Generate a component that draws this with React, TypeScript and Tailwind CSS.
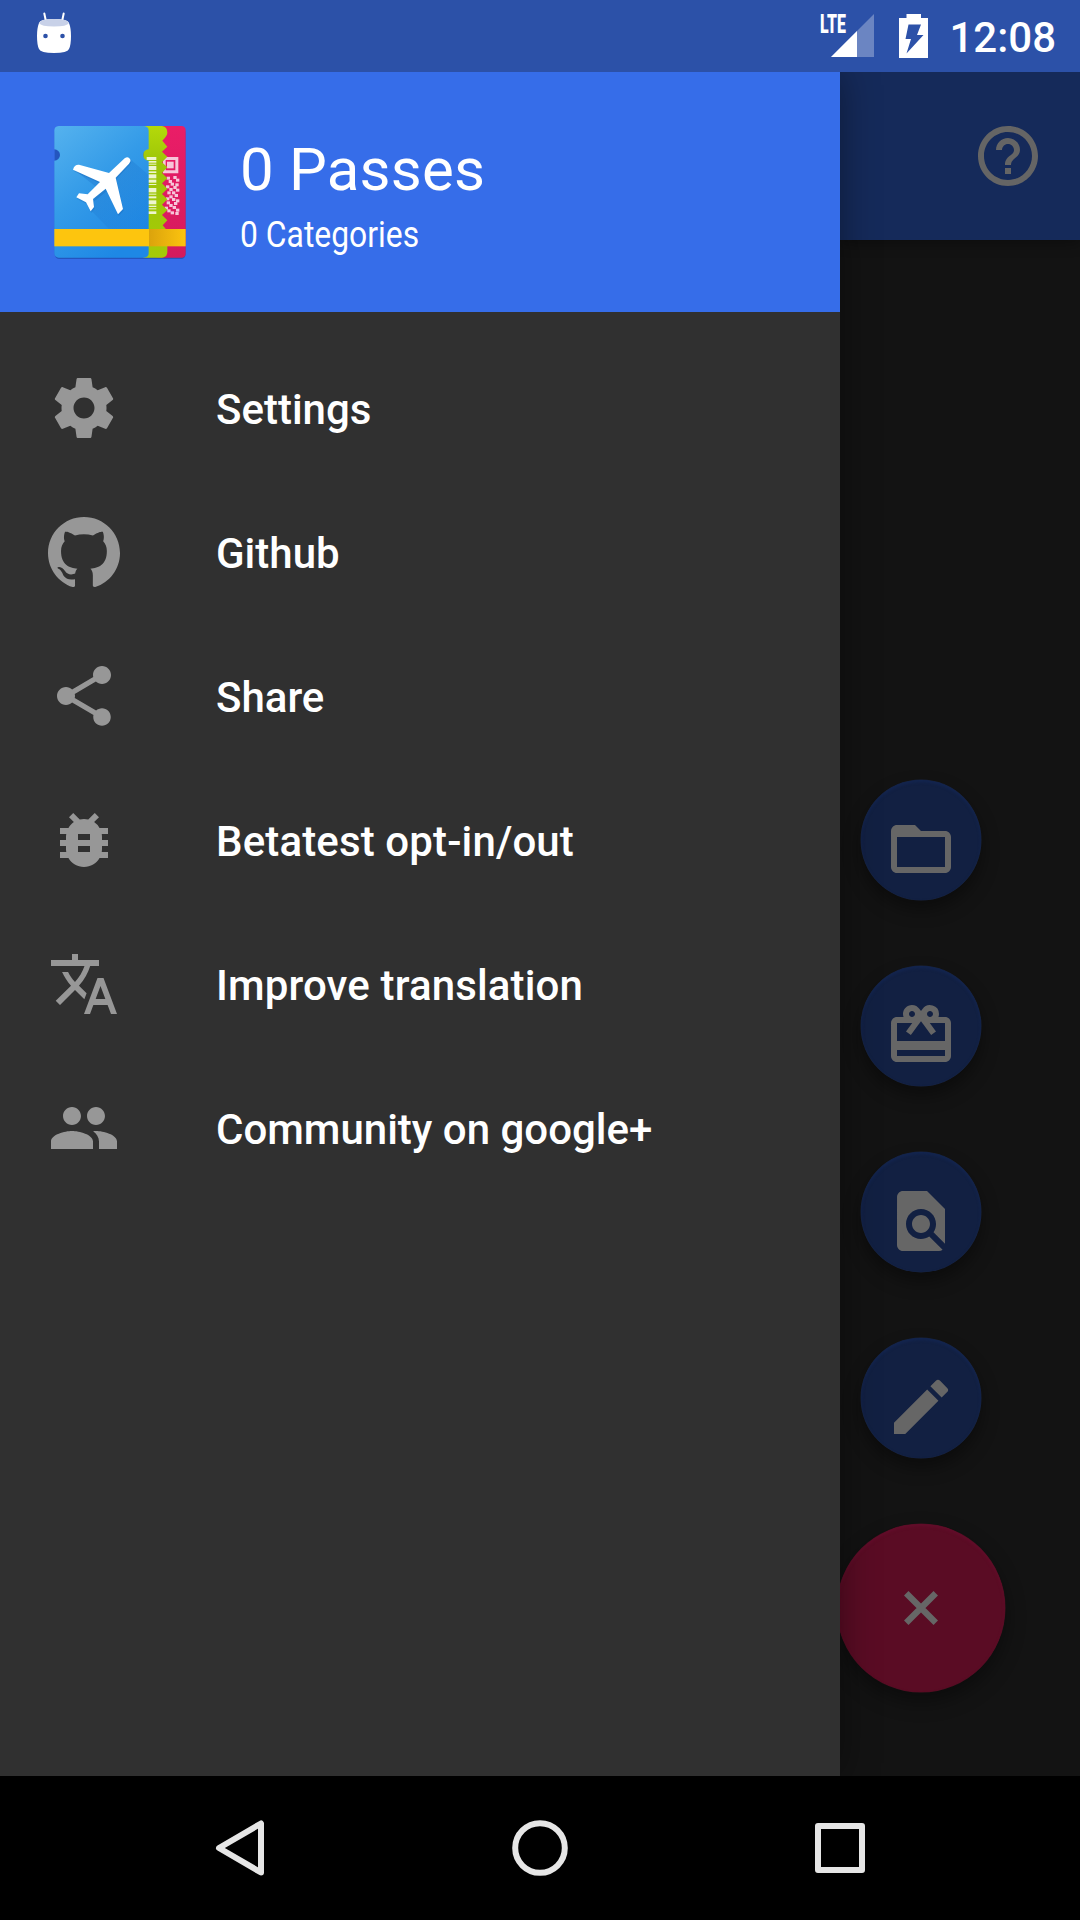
import type { ReactNode } from "react";
import {
  MdBugReport,
  MdEdit,
  MdFindInPage,
  MdFolderOpen,
  MdGroup,
  MdHelpOutline,
  MdRedeem,
  MdShare,
  MdTranslate,
} from "react-icons/md";
import { SiGithub } from "react-icons/si";

function SettingsIcon() {
  return (
    <svg viewBox="0 0 24 24" className="size-[72px]" fill="currentColor">
      <path d="M19.43 12.98c.04-.32.07-.64.07-.98s-.03-.66-.07-.98l2.11-1.65c.19-.15.24-.42.12-.64l-2-3.46c-.12-.22-.39-.3-.61-.22l-2.49 1c-.52-.4-1.08-.73-1.69-.98l-.38-2.65C14.46 2.18 14.25 2 14 2h-4c-.25 0-.46.18-.49.42l-.38 2.65c-.61.25-1.17.59-1.69.98l-2.49-1c-.23-.09-.49 0-.61.22l-2 3.46c-.13.22-.07.49.12.64l2.11 1.65c-.04.32-.07.65-.07.98s.03.66.07.98l-2.11 1.65c-.19.15-.24.42-.12.64l2 3.46c.12.22.39.3.61.22l2.49-1c.52.4 1.08.73 1.69.98l.38 2.65c.03.24.24.42.49.42h4c.25 0 .46-.18.49-.42l.38-2.65c.61-.25 1.17-.59 1.69-.98l2.49 1c.23.09.49 0 .61-.22l2-3.46c.12-.22.07-.49-.12-.64l-2.11-1.65zM12 15.5c-1.93 0-3.5-1.57-3.5-3.5s1.57-3.5 3.5-3.5 3.5 1.57 3.5 3.5-1.57 3.5-3.5 3.5z" />
    </svg>
  );
}

function AndroidHead() {
  return (
    <svg viewBox="0 0 36 42" className="h-[42px] w-9" fill="#fff">
      <path d="M8.3 1.5 10 9.5M27.7 1.5 26 9.5" stroke="#fff" strokeWidth="2" strokeLinecap="round" />
      <path d="M3 11Q4 7 18 7Q32 7 33 11Q35 16 35 24Q35 33 33 37Q31.5 41 18 41Q4.500 41 3 37Q1 33 1 24Q1 16 3 11Z" />
      <path d="M3 11Q4 7 18 7Q32 7 33 11Q31 14.500 18 14.500Q5 14.500 3 11Z" fill="#c8d1e8" />
      <circle cx="9.500" cy="24" r="2.300" fill="#2c51a8" />
      <circle cx="26.500" cy="24" r="2.300" fill="#2c51a8" />
    </svg>
  );
}

function StatusBar() {
  return (
    <header className="relative z-20 flex h-[72px] shrink-0 items-start bg-[#2c51a8] pl-9">
      <div className="mt-3">
        <AndroidHead />
      </div>
      <div className="relative mt-[14px] ml-auto h-[43px] w-[54px]">
        <svg viewBox="0 0 54 43" className="h-[43px] w-[54px]">
          <path d="M11 43 54 0V43Z" fill="#6b85c2" />
          <path d="M11 43 37 17V43Z" fill="#fff" />
        </svg>
        <span className="absolute -top-[3px] left-0 origin-left scale-x-[0.61] text-[26px] leading-[27px] font-black">
          LTE
        </span>
      </div>
      <svg viewBox="0 0 29 44" className="mt-[14px] ml-[25px] h-11 w-[29px]">
        <path d="M7.500 0H22V4H29V44H0V4H7.500Z" fill="#fff" />
        <path d="M9.500 10.500H22L18 21H24.500L7.500 39.500L12 25H6.500Z" fill="#2c51a8" />
      </svg>
      <span className="mt-[14px] mr-6 ml-[21px] text-[42px] leading-[48px] font-medium">12:08</span>
    </header>
  );
}

const qrCells: [number, number][] = [
  [410, 230], [430, 228], [438, 236], [416, 240], [422, 248], [436, 250], [408, 256], [430, 258],
  [418, 264], [438, 266], [412, 274], [426, 274], [434, 282], [418, 286], [408, 292], [426, 294],
  [438, 298], [432, 306], [410, 304], [418, 312], [404, 320], [428, 318], [438, 326], [412, 328],
  [422, 334], [436, 336],
];

const barcode: [number, number][] = [
  [171, 9], [183, 5], [191, 3], [198, 12], [214, 5], [223, 12], [239, 9], [252, 3], [264, 13],
  [281, 3], [289, 6], [301, 12], [317, 4], [325, 3], [334, 8],
];

function PassLogo() {
  return (
    <svg viewBox="54 60 432 432" className="size-36 shrink-0">
      <defs>
        <linearGradient id="ticket" x1="0" y1="0" x2="0.6" y2="1">
          <stop offset="0" stopColor="#55b2ee" />
          <stop offset="0.5" stopColor="#349be8" />
          <stop offset="1" stopColor="#1e88e5" />
        </linearGradient>
        <linearGradient id="planeShade" x1="0" y1="0" x2="1" y2="1">
          <stop offset="0" stopColor="#1565c0" stopOpacity="0.35" />
          <stop offset="1" stopColor="#1565c0" stopOpacity="0.05" />
        </linearGradient>
        <linearGradient id="edge" x1="0" x2="1" y1="0" y2="0">
          <stop offset="0" stopColor="#dba30c" />
          <stop offset="1" stopColor="#fcc40f" />
        </linearGradient>
        <linearGradient id="pink" x1="0" x2="0" y1="0" y2="1">
          <stop offset="0" stopColor="#ea1d67" />
          <stop offset="1" stopColor="#d41a5d" />
        </linearGradient>
        <linearGradient id="lime" x1="0" x2="0" y1="0" y2="1">
          <stop offset="0" stopColor="#b4d90a" />
          <stop offset="0.3" stopColor="#9cc408" />
          <stop offset="1" stopColor="#a4cb08" />
        </linearGradient>
      </defs>
      <rect x="74" y="84" width="393" height="393" rx="14" fill="#123d96" opacity="0.5" />
      <path d="M380 78H454Q467 78 467 92V459Q467 473 454 473H380Z" fill="url(#pink)" />
      <g fill="#f7c6d9">
        <path fillRule="evenodd" d="M399 171H445V220H399ZM407 180V211H436V180Z" />
        <rect x="411" y="185" width="20" height="20" />
        {qrCells.map(([x, y]) => (
          <rect key={`${x}-${y}`} x={x} y={y} width="10" height="9" />
        ))}
      </g>
      <path
        d="M340 78H396Q412 80 412 98Q412 107 397 122L412 140L396 155L412 170L396 187L412 202L396 219L412 235L396 250L412 266L396 282L412 298L396 314L412 330L396 345L412 361L398 376L412 392V456Q412 471 396 473H340Z"
        fill="url(#lime)"
      />
      <g fill="#eef5cf">
        {barcode.map(([y, h]) => (
          <rect key={y} x="350" y={y} width="29" height={h} />
        ))}
      </g>
      <path
        d="M86 78H342Q356 80 356 92V148A17 17 0 0 0 356 182V459Q356 472 342 473H86Q73 472 73 459V182A17 17 0 0 0 73 148V92Q73 79 86 78Z"
        fill="url(#ticket)"
      />
      <path d="M301 178 356 225V386H236L182 330 205 266 134 210 240 220Z" fill="url(#planeShade)" />
      <rect x="73" y="387" width="284" height="52" fill="#fdc50e" />
      <rect x="357" y="387" width="110" height="52" fill="url(#edge)" />
      <path
        d="M287 174Q297 168 301 178Q303 184 297 190L257 233L279 327L264 343L229 268L189 300L192 321L182 334L168 307L139 292L147 280L173 283L210 246L129 209L143 193L237 219Z"
        fill="#0f4f9f"
        opacity="0.2"
        transform="translate(2 5)"
      />
      <path
        d="M284 175Q294 168 300 177Q304 183 297 191L257 233L279 327L264 343L227 266L189 297L192 321L182 334L168 307L139 292L147 280L173 283L210 246L129 209Q133 193 147 194L237 219Z"
        fill="#fff"
      />
    </svg>
  );
}

const menu: { label: string; icon: ReactNode; tracking?: string }[] = [
  { label: "Settings", icon: <SettingsIcon /> },
  { label: "Github", icon: <SiGithub size={72} /> },
  { label: "Share", icon: <MdShare size={72} /> },
  { label: "Betatest opt-in/out", icon: <MdBugReport size={72} />, tracking: "tracking-[0.13px]" },
  { label: "Improve translation", icon: <MdTranslate size={72} />, tracking: "tracking-[0.14px]" },
  { label: "Community on google+", icon: <MdGroup size={72} /> },
];

function Drawer() {
  return (
    <aside className="relative z-10 flex w-[840px] shrink-0 flex-col bg-[#303030] shadow-[0_0_36px_rgba(0,0,0,0.4)]">
      <div className="flex h-60 bg-[#366de9] pt-12 pl-12">
        <PassLogo />
        <div className="ml-12 pt-[15px]">
          <div className="text-[60px] leading-[70px] tracking-[0.2px]">0 Passes</div>
          <div className="origin-left scale-x-[0.885] pt-[9px] text-[36px] leading-[42px] whitespace-nowrap">
            0 Categories
          </div>
        </div>
      </div>
      <nav className="pt-6">
        {menu.map(({ label, icon, tracking = "" }) => (
          <a key={label} className="flex h-36 items-center gap-24 pl-12">
            <span className="text-[#979797]">{icon}</span>
            <span className={`pt-[3px] text-[42px] leading-[50px] font-medium ${tracking}`}>{label}</span>
          </a>
        ))}
      </nav>
    </aside>
  );
}

const actions: { name: string; icon: ReactNode }[] = [
  { name: "open", icon: <MdFolderOpen size={72} /> },
  { name: "demo", icon: <MdRedeem size={72} /> },
  { name: "scan", icon: <MdFindInPage size={72} /> },
  { name: "create", icon: <MdEdit size={72} /> },
];

function Content() {
  return (
    <main className="flex flex-1 flex-col overflow-hidden bg-[#131313] text-[#666]">
      <div className="flex h-[168px] shrink-0 items-center justify-end bg-[#152a5a] pr-9 shadow-[0_4px_12px_rgba(0,0,0,0.3)]">
        <MdHelpOutline size={72} color="#656565" />
      </div>
      <div className="mt-[540px] flex w-[162px] flex-col items-center gap-[66px]">
        {actions.map(({ name, icon }) => (
          <button
            key={name}
            aria-label={name}
            className="flex size-[120px] shrink-0 items-center justify-center rounded-full bg-[#122042] pt-[18px] shadow-[0_0_0_0.5px_#1a2541,0_9px_18px_rgba(0,0,0,0.4),inset_0_2px_3px_#132550]"
          >
            {icon}
          </button>
        ))}
        <button
          aria-label="close"
          className="flex size-[168px] shrink-0 items-center justify-center rounded-full bg-[#5a0c24] shadow-[0_0_0_0.5px_#4d1223,0_9px_20px_rgba(0,0,0,0.4),inset_0_2px_3px_#630d2b]"
        >
          <svg viewBox="0 0 34 34" className="size-[34px]" stroke="currentColor" strokeWidth="6.300">
            <path d="M2.250 2.250 31.750 31.750M31.750 2.250 2.250 31.750" />
          </svg>
        </button>
      </div>
    </main>
  );
}

function NavBar() {
  return (
    <footer className="relative z-20 flex h-36 shrink-0 items-center justify-between bg-black px-[210px]">
      <svg viewBox="0 0 60 60" className="size-[60px]" fill="none" stroke="#e6e6e6" strokeWidth="6" strokeLinejoin="round">
        <path d="M51 5.500V54.500L9 30Z" />
      </svg>
      <svg viewBox="0 0 60 60" className="size-[60px]" fill="none" stroke="#e6e6e6" strokeWidth="6">
        <circle cx="30" cy="30" r="24.800" />
      </svg>
      <svg viewBox="0 0 60 60" className="size-[60px]" fill="none" stroke="#e6e6e6" strokeWidth="6" strokeLinejoin="round">
        <rect x="8" y="8" width="44" height="44" />
      </svg>
    </footer>
  );
}

export default function App() {
  return (
    <div className="flex h-[1920px] w-[1080px] flex-col overflow-hidden bg-black font-['Roboto',sans-serif] text-white">
      <StatusBar />
      <div className="flex min-h-0 flex-1">
        <Drawer />
        <Content />
      </div>
      <NavBar />
    </div>
  );
}
